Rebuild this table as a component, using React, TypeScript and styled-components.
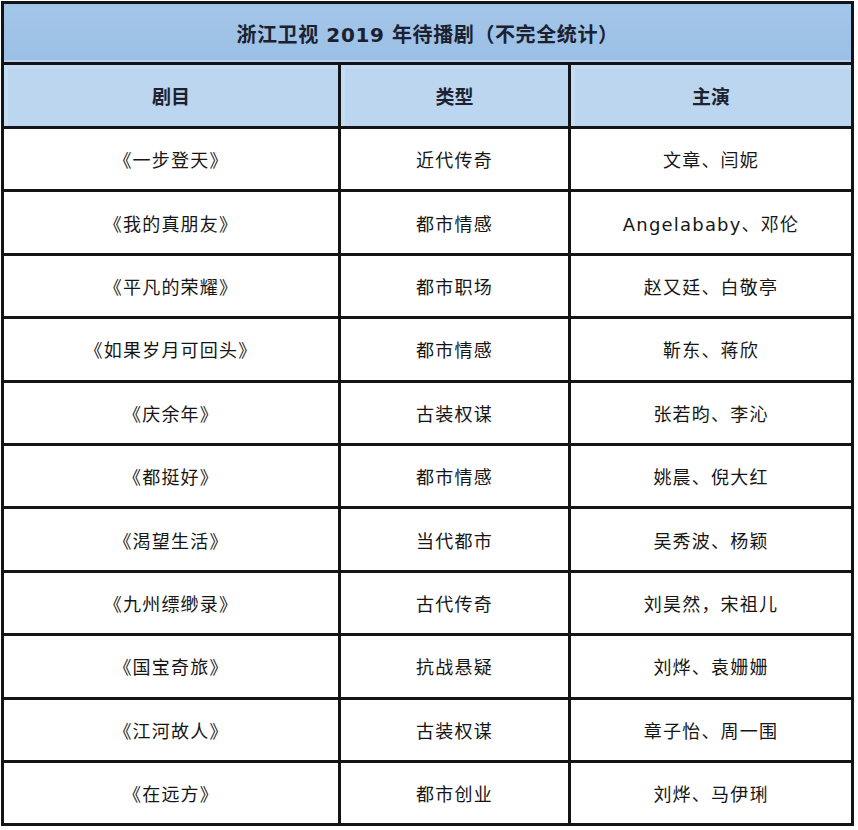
import React from "react";
import styled, { createGlobalStyle } from "styled-components";

const GlobalStyle = createGlobalStyle`
  html, body {
    margin: 0;
    padding: 0;
    background: #ffffff;
  }
  body {
    font-family: "DejaVu Sans", "Noto Sans CJK SC", sans-serif;
  }
`;

type Show = { title: string; genre: string; cast: string };

const shows: Show[] = [
  { title: "《一步登天》", genre: "近代传奇", cast: "文章、闫妮" },
  { title: "《我的真朋友》", genre: "都市情感", cast: "Angelababy、邓伦" },
  { title: "《平凡的荣耀》", genre: "都市职场", cast: "赵又廷、白敬亭" },
  { title: "《如果岁月可回头》", genre: "都市情感", cast: "靳东、蒋欣" },
  { title: "《庆余年》", genre: "古装权谋", cast: "张若昀、李沁" },
  { title: "《都挺好》", genre: "都市情感", cast: "姚晨、倪大红" },
  { title: "《渴望生活》", genre: "当代都市", cast: "吴秀波、杨颖" },
  { title: "《九州缥缈录》", genre: "古代传奇", cast: "刘昊然，宋祖儿" },
  { title: "《国宝奇旅》", genre: "抗战悬疑", cast: "刘烨、袁姗姗" },
  { title: "《江河故人》", genre: "古装权谋", cast: "章子怡、周一围" },
  { title: "《在远方》", genre: "都市创业", cast: "刘烨、马伊琍" },
];

const Page = styled.div`
  width: 858px;
  height: 830px;
  overflow: hidden;
`;

const Table = styled.table`
  border-collapse: collapse;
  width: 853px;
  margin: 1px 0 0 1px;
  table-layout: fixed;
  border: 3px solid #121417;
`;

const TitleCell = styled.th`
  height: 58px;
  padding: 0;
  background: linear-gradient(#a2c5e9, #9cc0e5);
  border: 3px solid #121417;
  color: #1b2130;
  font-size: 20px;
  font-weight: 700;
  text-align: center;
  letter-spacing: 0.6px;
  box-shadow: inset 0 -2px 0 #b7d0ec;
`;

const HeadCell = styled.th`
  height: 61px;
  padding: 0;
  background: #bdd6ef;
  border: 3px solid #121417;
  color: #1d2230;
  font-size: 19px;
  font-weight: 700;
  text-align: center;
  box-shadow: inset 4px 4px 0 #c6dcf1;
`;

const Cell = styled.td`
  height: 60.4px;
  padding: 0;
  background: #ffffff;
  border: 3px solid #121417;
  color: #161616;
  font-size: 18px;
  text-align: center;
  letter-spacing: 1.2px;
`;

export default function App() {
  return (
    <Page>
      <GlobalStyle />
      <Table>
        <colgroup>
          <col style={{ width: 337 }} />
          <col style={{ width: 230 }} />
          <col style={{ width: 283 }} />
        </colgroup>
        <thead>
          <tr>
            <TitleCell colSpan={3}>浙江卫视 2019 年待播剧（不完全统计）</TitleCell>
          </tr>
          <tr>
            <HeadCell>剧目</HeadCell>
            <HeadCell>类型</HeadCell>
            <HeadCell>主演</HeadCell>
          </tr>
        </thead>
        <tbody>
          {shows.map((s) => (
            <tr key={s.title}>
              <Cell>{s.title}</Cell>
              <Cell>{s.genre}</Cell>
              <Cell>{s.cast}</Cell>
            </tr>
          ))}
        </tbody>
      </Table>
    </Page>
  );
}
